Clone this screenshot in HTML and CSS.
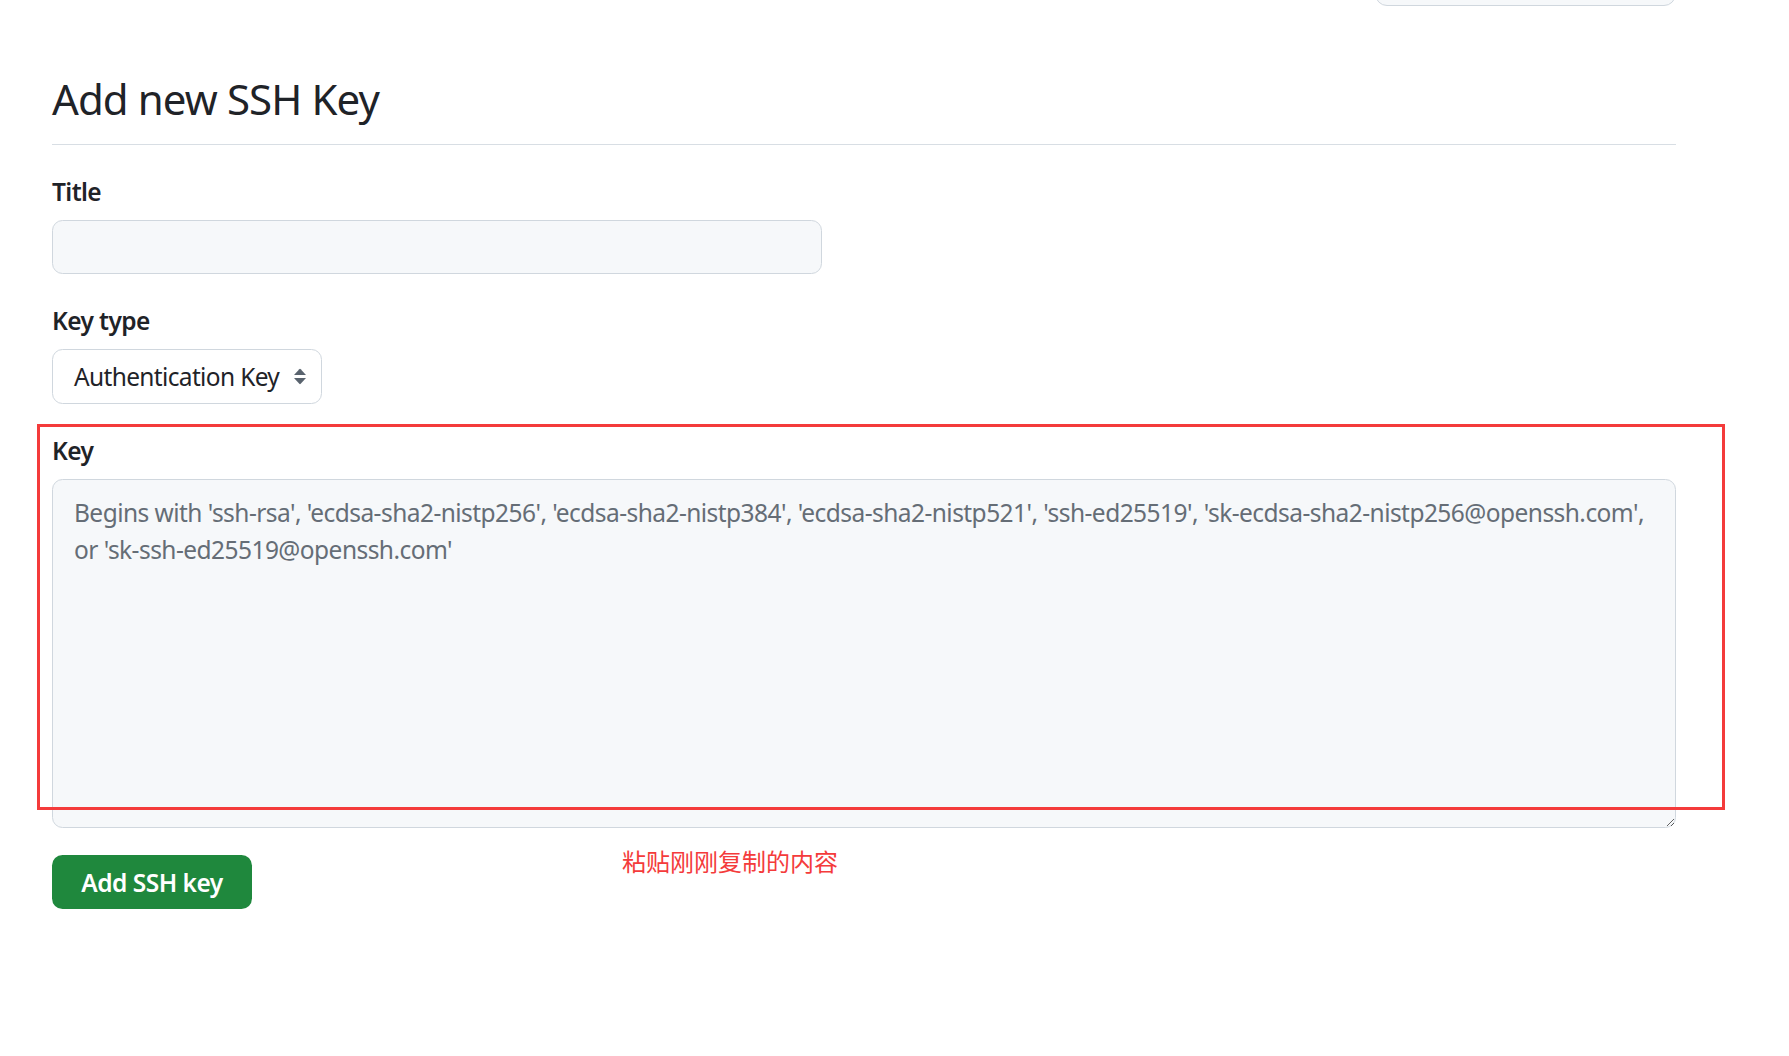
FILE: index.html
```html
<!DOCTYPE html>
<html lang="en">
<head>
    <meta charset="UTF-8">
    <meta name="viewport" content="width=device-width, initial-scale=1.0">
    <title>Add new SSH Key</title>
    <link rel="stylesheet" href="styles.css">
</head>
<body>

<div class="page">
    <div class="topbar">
        <div class="topbar-box"></div>
    </div>

    <div class="subhead">
        <h2>Add new SSH Key</h2>
    </div>

    <form class="key-form" onsubmit="return false;">
        <div class="form-group">
            <label for="key-title">Title</label>
            <input type="text" id="key-title" class="form-control">
        </div>

        <div class="form-group">
            <label for="key-type">Key type</label>
            <div class="select" id="key-type">
                <span>Authentication Key</span>
                <svg width="14" height="17" viewBox="0 0 14 17">
                    <path d="M1 7 L6.3 1.2 Q7 0.5 7.7 1.2 L13 7 Z" fill="#59636e"/>
                    <path d="M1 10 L13 10 L7.7 15.8 Q7 16.5 6.3 15.8 Z" fill="#59636e"/>
                </svg>
            </div>
        </div>

        <div class="form-group key-group">
            <label for="key-body">Key</label>
            <textarea id="key-body" class="form-control" placeholder="Begins with 'ssh-rsa', 'ecdsa-sha2-nistp256', 'ecdsa-sha2-nistp384', 'ecdsa-sha2-nistp521', 'ssh-ed25519', 'sk-ecdsa-sha2-nistp256@openssh.com', or 'sk-ssh-ed25519@openssh.com'"></textarea>
            <div class="mark"></div>
        </div>

        <div class="actions">
            <button type="submit" class="btn-primary">Add SSH key</button>
            <span class="note">粘贴刚刚复制的内容</span>
        </div>
    </form>
</div>

</body>
</html>
```

FILE: styles.css
```css
body {
    margin: 0;
    font-family: "Noto Sans", "Open Sans", sans-serif;
    font-size: 24.5px;
    color: #1f2328;
    background: #fff;
}
.page {
    padding: 0 113px 0 52px;
}
.topbar {
    display: flex;
    justify-content: flex-end;
}
.topbar-box {
    width: 301px;
    height: 40px;
    margin-top: -34px;
    box-sizing: border-box;
    border: 1px solid #d0d7de;
    border-radius: 12px;
    background: #f6f8fa;
}
.subhead {
    margin-top: 61px;
    padding-bottom: 14px;
    border-bottom: 1px solid #d8dee4;
}
.subhead h2 {
    margin: 0;
    font-size: 42px;
    font-weight: 400;
    line-height: 63px;
    letter-spacing: -0.9px;
}
.form-group {
    margin-top: 29px;
}
.form-group label {
    display: block;
    font-weight: 600;
    line-height: 35px;
    margin-bottom: 11px;
    letter-spacing: -0.6px;
}
.form-control {
    box-sizing: border-box;
    border: 1px solid #d0d7de;
    border-radius: 10.5px;
    background: #f6f8fa;
    font-family: inherit;
    font-size: 24.5px;
    color: #1f2328;
}
input.form-control {
    display: block;
    width: 770px;
    height: 54px;
    padding: 0 21px;
}
.select {
    display: flex;
    align-items: center;
    justify-content: space-between;
    box-sizing: border-box;
    width: 270px;
    height: 55px;
    padding: 0 14px 0 21px;
    border: 1px solid #d0d7de;
    border-radius: 10.5px;
    background: #fff;
}
.select span {
    line-height: 35px;
    letter-spacing: -0.65px;
}
.key-group {
    position: relative;
}
textarea.form-control {
    display: block;
    width: 100%;
    height: 349px;
    padding: 14px 21px;
    line-height: 37px;
    resize: vertical;
    letter-spacing: -0.55px;
}
textarea.form-control::placeholder {
    color: #656d76;
}
/* red outline drawn around the key field */
.mark {
    position: absolute;
    top: -9px;
    left: -15px;
    width: 1688px;
    height: 386px;
    box-sizing: border-box;
    border: 3px solid #f43b3b;
    pointer-events: none;
}
.actions {
    display: flex;
    align-items: flex-start;
    margin-top: 27px;
}
.btn-primary {
    height: 54px;
    width: 200px;
    padding: 0;
    border: none;
    border-radius: 10.5px;
    background: #1f883d;
    color: #fff;
    font-family: inherit;
    font-size: 24.5px;
    font-weight: 600;
    letter-spacing: -0.5px;
}
.note {
    margin-left: 370px;
    margin-top: -6px;
    font-family: "Noto Sans CJK SC", sans-serif;
    font-size: 24px;
    line-height: 24px;
    color: #f43b3b;
}
```
